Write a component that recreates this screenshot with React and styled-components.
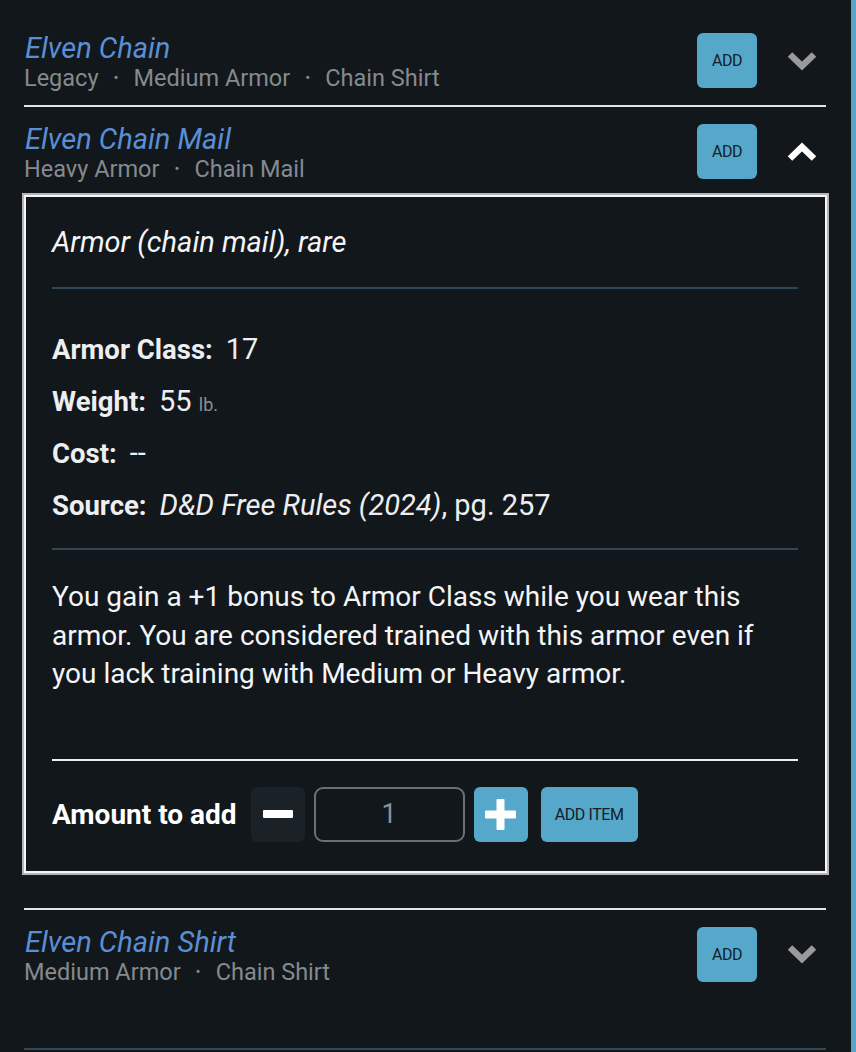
import React from "react";
import styled, { createGlobalStyle } from "styled-components";

const Global = createGlobalStyle`
  html, body { margin: 0; padding: 0; background: #12171c; }
  body { font-family: Roboto, "Noto Sans", sans-serif; color: #eef0f2; }
  * { box-sizing: border-box; }
`;

const Page = styled.div`
  display: flex;
  min-height: 1052px;
  background: #12171c;
`;

const Main = styled.main`
  flex: 1;
  padding: 16px 25px 0 24px;
  display: flex;
  flex-direction: column;
`;

const SideBar = styled.div`
  width: 5px;
  background: #56a6c9;
`;

const Item = styled.section`
  display: flex;
  flex-direction: column;
`;

const Header = styled.div`
  display: flex;
  align-items: flex-start;
  padding-top: 17px;
`;

const Names = styled.div`
  flex: 1;
  display: flex;
  flex-direction: column;
`;

const Title = styled.div`
  font-style: italic;
  font-size: 29px;
  line-height: 30px;
  color: #5b8fd3;
  padding-left: 1px;
`;

const Meta = styled.div`
  font-size: 23.5px;
  line-height: 30px;
  color: #858a8f;
  white-space: pre;
`;

const Dot = styled.span`
  font-size: 15px;
  vertical-align: 3px;
  margin: 0 15px;
`;

const Actions = styled.div`
  display: flex;
  align-items: center;
  gap: 21px;
`;

const AddButton = styled.button`
  height: 55px;
  min-width: ${(p) => (p.$wide ? "97px" : "60px")};
  padding: 0 ${(p) => (p.$wide ? "12px" : "0")};
  border: none;
  border-radius: 6px;
  background: #55a8c9;
  color: #14202a;
  font-family: Roboto, sans-serif;
  font-size: 16px;
  letter-spacing: -0.4px;
  text-transform: uppercase;
`;

const Toggle = styled.button`
  width: 48px;
  height: 40px;
  border: none;
  background: none;
  padding: 0;
  display: flex;
  align-items: center;
  justify-content: center;
  color: ${(p) => (p.$open ? "#ffffff" : "#9a9a9a")};
`;

const Divider = styled.hr`
  border: none;
  height: 2px;
  margin: ${(p) => p.$top}px 0 0;
  background: #e2e4e6;
`;

const Detail = styled.div`
  margin: 11px -1px 0 0;
  border: 2px solid #f6f6f6;
  outline: 2px solid #b3b5b7;
  padding: 30px 27px 29px 26px;
  display: flex;
  flex-direction: column;
`;

const Kind = styled.div`
  font-style: italic;
  font-size: 29px;
  line-height: 30px;
  color: #f4f5f6;
`;

const Rule = styled.hr`
  border: none;
  height: 2px;
  flex-shrink: 0;
  margin: ${(p) => p.$top}px 0 ${(p) => p.$bottom}px;
  background: ${(p) => (p.$light ? "#eceef0" : "#324552")};
`;

const Stats = styled.div`
  display: flex;
  flex-direction: column;
`;

const Stat = styled.div`
  font-size: 29px;
  line-height: 52px;
  height: 52px;
  color: #eceef0;
`;

const Label = styled.b`
  font-weight: 700;
  font-size: 27.5px;
  margin-right: 13px;
`;

const Unit = styled.span`
  font-size: 18px;
  color: #8a8f94;
`;

const Description = styled.p`
  margin: 0;
  font-size: 28px;
  line-height: 38.5px;
  color: #f4f5f6;
`;

const AmountRow = styled.div`
  display: flex;
  align-items: center;
  gap: 9px;
`;

const AmountLabel = styled.span`
  font-size: 28px;
  font-weight: 700;
  color: #ffffff;
  margin-right: 5px;
`;

const StepButton = styled.button`
  width: 54px;
  height: 55px;
  border: none;
  border-radius: 6px;
  background: ${(p) => (p.$primary ? "#55a8c9" : "#1a2127")};
  display: flex;
  align-items: center;
  justify-content: center;
  padding: 0;
`;

const Quantity = styled.div`
  width: 151px;
  height: 55px;
  border: 2px solid #6c7075;
  border-radius: 9px;
  display: flex;
  align-items: center;
  justify-content: center;
  font-size: 27px;
  color: #8d9196;
`;

const AddItem = styled(AddButton)`
  margin-left: 4px;
`;

const Footer = styled.div`
  margin-top: 61px;
  height: 2px;
  background: #2f4756;
`;

const Chevron = ({ up }) => (
  <svg width="30" height="20" viewBox="0 0 30 20">
    <path
      d={up ? "M3 16.5 L15 5 L27 16.5" : "M3 3.5 L15 15 L27 3.5"}
      fill="none"
      stroke="currentColor"
      strokeWidth="6.5"
      strokeLinejoin="miter"
    />
  </svg>
);

const Minus = () => (
  <svg width="30" height="8" viewBox="0 0 30 8">
    <rect x="0" y="0" width="30" height="8" rx="1" fill="#ffffff" />
  </svg>
);

const Plus = () => (
  <svg width="31" height="31" viewBox="0 0 31 31">
    <rect x="0" y="11.5" width="31" height="8" rx="1" fill="#ffffff" />
    <rect x="11.5" y="0" width="8" height="31" rx="1" fill="#ffffff" />
  </svg>
);

const items = [
  { name: "Elven Chain", meta: ["Legacy", "Medium Armor", "Chain Shirt"] },
  { name: "Elven Chain Mail", meta: ["Heavy Armor", "Chain Mail"], open: true },
  { name: "Elven Chain Shirt", meta: ["Medium Armor", "Chain Shirt"], last: true },
];

function ItemHeader({ item }) {
  return (
    <Header>
      <Names>
        <Title>{item.name}</Title>
        <Meta>
          {item.meta.map((m, i) => (
            <React.Fragment key={m}>
              {i > 0 && <Dot>•</Dot>}
              {m}
            </React.Fragment>
          ))}
        </Meta>
      </Names>
      <Actions>
        <AddButton>Add</AddButton>
        <Toggle $open={item.open}>
          <Chevron up={item.open} />
        </Toggle>
      </Actions>
    </Header>
  );
}

function ItemDetail() {
  return (
    <Detail>
      <Kind>Armor (chain mail), rare</Kind>
      <Rule $top={30} $bottom={34} />
      <Stats>
        <Stat>
          <Label>Armor Class:</Label>17
        </Stat>
        <Stat>
          <Label>Weight:</Label>55 <Unit>lb.</Unit>
        </Stat>
        <Stat>
          <Label>Cost:</Label>--
        </Stat>
        <Stat>
          <Label>Source:</Label>
          <i>D&amp;D Free Rules (2024)</i>, pg. 257
        </Stat>
      </Stats>
      <Rule $top={17} $bottom={28} />
      <Description>
        You gain a +1 bonus to Armor Class while you wear this armor. You are
        considered trained with this armor even if you lack training with Medium
        or Heavy armor.
      </Description>
      <Rule $light $top={65} $bottom={26} />
      <AmountRow>
        <AmountLabel>Amount to add</AmountLabel>
        <StepButton>
          <Minus />
        </StepButton>
        <Quantity>1</Quantity>
        <StepButton $primary>
          <Plus />
        </StepButton>
        <AddItem $wide>Add Item</AddItem>
      </AmountRow>
    </Detail>
  );
}

export default function App() {
  return (
    <Page>
      <Global />
      <Main>
        {items.map((item) => (
          <Item key={item.name}>
            <ItemHeader item={item} />
            {item.open && <ItemDetail />}
            {!item.last && <Divider $top={item.open ? 35 : 12} />}
          </Item>
        ))}
        <Footer />
      </Main>
      <SideBar />
    </Page>
  );
}
